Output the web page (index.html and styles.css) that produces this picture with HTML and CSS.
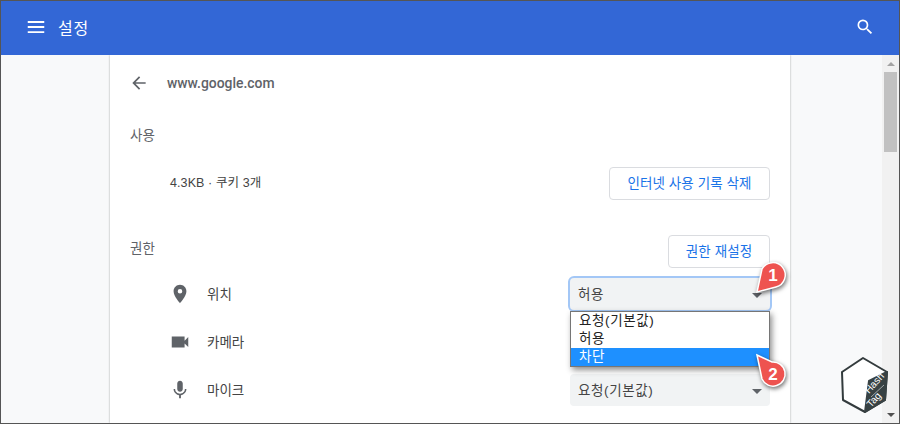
FILE: index.html
```html
<!DOCTYPE html>
<html lang="ko">
<head>
    <meta charset="UTF-8">
    <meta name="viewport" content="width=device-width, initial-scale=1.0">
    <title>설정</title>
    <link rel="stylesheet" href="styles.css">
</head>
<body>
    <div class="window">
        <header class="toolbar">
            <svg class="menu-icon" width="22" height="22" viewBox="0 0 24 24"><path d="M3 18.500h18v-2H3v2zm0-5.500h18v-2H3v2zm0-7.500v2h18v-2H3z"/></svg>
            <span class="toolbar-title">설정</span>
            <svg class="search-icon" width="20" height="20" viewBox="0 0 24 24"><path d="M15.5 14h-.79l-.28-.27A6.470 6.470 0 0 0 16 9.500 6.500 6.500 0 1 0 9.500 16c1.610 0 3.090-.59 4.230-1.570l.27.28v.79l5 4.990L20.490 19l-4.990-5zm-6 0C7.010 14 5 11.990 5 9.500S7.010 5 9.500 5 14 7.010 14 9.500 11.990 14 9.500 14z"/></svg>
        </header>

        <div class="content">
            <main class="page">
                <section class="card">
                    <div class="site-row">
                        <svg class="back-icon" width="20" height="20" viewBox="0 0 24 24"><path d="M20 11H7.830l5.590-5.590L12 4l-8 8 8 8 1.410-1.410L7.830 13H20v-2z"/></svg>
                        <span class="site-name">www.google.com</span>
                    </div>

                    <h2 class="section-title">사용</h2>
                    <div class="usage-row">
                        <span class="usage-text">4.3KB · 쿠키 3개</span>
                        <button class="btn btn-wide">인터넷 사용 기록 삭제</button>
                    </div>

                    <div class="perm-head">
                        <h2 class="section-title">권한</h2>
                        <button class="btn">권한 재설정</button>
                    </div>

                    <div class="perm-row">
                        <svg class="perm-icon" width="22" height="22" viewBox="0 0 24 24"><path d="M12 2C8.130 2 5 5.130 5 9c0 5.250 7 13 7 13s7-7.750 7-13c0-3.870-3.130-7-7-7zm0 9.500a2.500 2.500 0 0 1 0-5 2.500 2.500 0 0 1 0 5z"/></svg>
                        <span class="perm-label">위치</span>
                        <div class="select select-focus">허용<i class="caret"></i></div>
                    </div>
                    <div class="perm-row">
                        <svg class="perm-icon" width="22" height="22" viewBox="0 0 24 24"><path d="M17 10.500V6H3v12h14v-4.500l4 4v-11l-4 4z"/></svg>
                        <span class="perm-label">카메라</span>
                        <div class="select"></div>
                    </div>
                    <div class="perm-row">
                        <svg class="perm-icon" width="22" height="22" viewBox="0 0 24 24"><path d="M12 14c1.660 0 3-1.340 3-3V5c0-1.660-1.340-3-3-3S9 3.340 9 5v6c0 1.660 1.340 3 3 3zm5.300-3c0 3-2.540 5.100-5.300 5.100S6.700 14 6.700 11H5c0 3.410 2.720 6.230 6 6.720V21h2v-3.280c3.280-.48 6-3.300 6-6.720h-1.700z"/></svg>
                        <span class="perm-label">마이크</span>
                        <div class="select">요청(기본값)<i class="caret"></i></div>
                    </div>
                </section>
            </main>
            <div class="scrollbar">
                <i class="arrow-up"></i>
                <div class="thumb"></div>
                <i class="arrow-down"></i>
            </div>
        </div>

        <!-- 펼쳐진 목록 -->
        <ul class="dropdown">
            <li>요청(기본값)</li>
            <li>허용</li>
            <li class="selected">차단</li>
        </ul>

        <!-- 주석 번호 -->
        <svg class="callout callout-one" width="40" height="40" viewBox="0 0 40 40">
            <path class="callout-fill" d="M8 33 L13 10 A12.400 12.400 0 1 1 27 28 Z"/>
            <text x="24" y="22">1</text>
        </svg>
        <svg class="callout callout-two" width="40" height="40" viewBox="0 0 40 40">
            <path class="callout-fill" d="M6 4 L21 11 A12.100 12.100 0 1 1 11 28 Z"/>
            <text x="22" y="29">2</text>
        </svg>

        <!-- 워터마크 -->
        <svg class="hashtag" width="56" height="62" viewBox="0 0 56 62">
            <path d="M22 2 L46 16 L44 44 L24 56 L2 44 L1 16 Z" fill="#fff" stroke="#333b3d" stroke-width="2" stroke-linejoin="round"/>
            <path d="M24 56 L44 44 L46 16 L28 25 Z" fill="#384244" stroke="#384244" stroke-width="2" stroke-linejoin="round"/>
            <text class="hashtag-text" transform="translate(28 38) rotate(-48)">Hash</text>
            <line x1="30" y1="41" x2="43" y2="29" stroke="#cfd3d4" stroke-width="0.7"/>
            <text class="hashtag-text" transform="translate(30 52) rotate(-48)">Tag</text>
        </svg>
    </div>
</body>
</html>
```
FILE: styles.css
```css
* {
    margin: 0;
    padding: 0;
    box-sizing: border-box;
}

body {
    width: 900px;
    height: 424px;
    overflow: hidden;
    font-family: "Liberation Sans", "Noto Sans CJK KR", sans-serif;
    font-size: 13.5px;
    color: #333;
}

.window {
    position: relative;
    display: flex;
    flex-direction: column;
    height: 424px;
    border: 1px solid #555;
    overflow: hidden;
}

/* 상단 바 */
.toolbar {
    display: flex;
    align-items: center;
    flex-shrink: 0;
    height: 54px;
    padding: 0 24px 0 24px;
    background-color: #3367d6;
    color: #fff;
}

.menu-icon,
.search-icon {
    fill: #fff;
    margin-bottom: 2px;
}

.search-icon {
    margin-left: auto;
}

.toolbar-title {
    margin-left: 11px;
    padding-bottom: 3px;
    font-size: 16px;
    letter-spacing: 0.8px;
}

/* 본문 */
.content {
    display: flex;
    flex: 1;
    min-height: 0;
    background-color: #f8f9fa;
}

.page {
    flex: 1;
    padding-left: 109px;
    overflow: hidden;
}

.card {
    width: 680px;
    height: 100%;
    padding: 0 20px;
    background-color: #fff;
    box-shadow: 0 0 2px rgba(60, 64, 67, 0.45);
}

.site-row {
    display: flex;
    align-items: center;
    height: 55px;
}

.back-icon {
    fill: #5f6368;
    margin-left: -1px;
    margin-right: 18px;
}

.site-name {
    font-family: Roboto, "Liberation Sans", sans-serif;
    font-size: 13.9px;
    font-weight: 500;
    color: #5f6368;
}

.section-title {
    font-size: 13.5px;
    font-weight: normal;
    color: #5f6368;
}

.site-row + .section-title {
    margin-top: 17px;
    line-height: 18px;
}

.usage-row {
    display: flex;
    align-items: center;
    justify-content: space-between;
    height: 33px;
    margin-top: 22px;
    padding-left: 40px;
}

.usage-text {
    margin-bottom: 5px;
    font-size: 12.5px;
    letter-spacing: 0.1px;
    color: #444;
}

.btn {
    width: 102px;
    height: 33px;
    padding-bottom: 3px;
    border: 1px solid #dadce0;
    border-radius: 4px;
    background-color: #fff;
    font-family: inherit;
    font-size: 13.5px;
    letter-spacing: 0.1px;
    color: #1a73e8;
}

.btn-wide {
    width: 161px;
}

.perm-head {
    display: flex;
    align-items: flex-start;
    justify-content: space-between;
    height: 32px;
    margin-top: 35px;
}

.perm-head .section-title {
    margin-top: 2px;
}

.perm-row {
    display: flex;
    align-items: center;
    height: 32px;
    margin-top: 16px;
    padding-left: 39px;
}

.perm-head + .perm-row {
    margin-top: 11px;
}

.perm-icon {
    fill: #5f6368;
}

.perm-label {
    margin-left: 16px;
    margin-bottom: 2px;
    font-size: 13.5px;
    color: #444;
}

.select {
    position: relative;
    display: flex;
    align-items: center;
    width: 200px;
    height: 32px;
    margin-left: auto;
    padding-left: 8px;
    padding-bottom: 2px;
    border-radius: 4px;
    background-color: #f1f3f4;
    font-size: 13.5px;
    letter-spacing: 0.6px;
    color: #444;
}

.select-focus {
    outline: 2px solid rgba(26, 115, 232, 0.4);
}

.caret {
    position: absolute;
    right: 8px;
    top: 15px;
    border-left: 5px solid transparent;
    border-right: 5px solid transparent;
    border-top: 5px solid #5f6368;
}

/* 스크롤바 */
.scrollbar {
    display: flex;
    flex-direction: column;
    align-items: center;
    flex-shrink: 0;
    width: 17px;
    background-color: #f1f1f1;
}

.thumb {
    width: 13px;
    height: 80px;
    margin-top: 6px;
    background-color: #c1c1c1;
}

.arrow-up,
.arrow-down {
    display: block;
    border-left: 4px solid transparent;
    border-right: 4px solid transparent;
}

.arrow-up {
    margin-top: 7px;
    border-bottom: 4px solid #a3a3a3;
}

.arrow-down {
    margin-top: auto;
    margin-bottom: 6px;
    border-top: 4px solid #505050;
}

/* 펼쳐진 목록 */
.dropdown {
    position: absolute;
    left: 569px;
    top: 310px;
    width: 200px;
    height: 56px;
    list-style: none;
    border: 1px solid #767676;
    background-color: #fff;
    box-shadow: 2px 3px 6px rgba(0, 0, 0, 0.45);
    font-size: 13.5px;
    line-height: 18px;
    letter-spacing: 0.6px;
    color: #222;
}

.dropdown li {
    height: 18px;
    padding-left: 8px;
}

.dropdown .selected {
    background-color: #1e90ff;
    color: #fff;
}

/* 주석 번호 */
.callout {
    position: absolute;
    overflow: visible;
}

.callout-one {
    left: 748px;
    top: 258px;
}

.callout-two {
    left: 750px;
    top: 350px;
}

.callout-fill {
    fill: #ee5350;
    stroke: #fff;
    stroke-width: 1.5px;
    filter: drop-shadow(1px 2px 2px rgba(0, 0, 0, 0.55));
}

.callout text {
    fill: #fff;
    font-size: 17px;
    font-weight: bold;
    text-anchor: middle;
}

.hashtag {
    position: absolute;
    left: 840px;
    top: 355px;
}

.hashtag-text {
    fill: #fff;
    font-size: 10px;
}
```
